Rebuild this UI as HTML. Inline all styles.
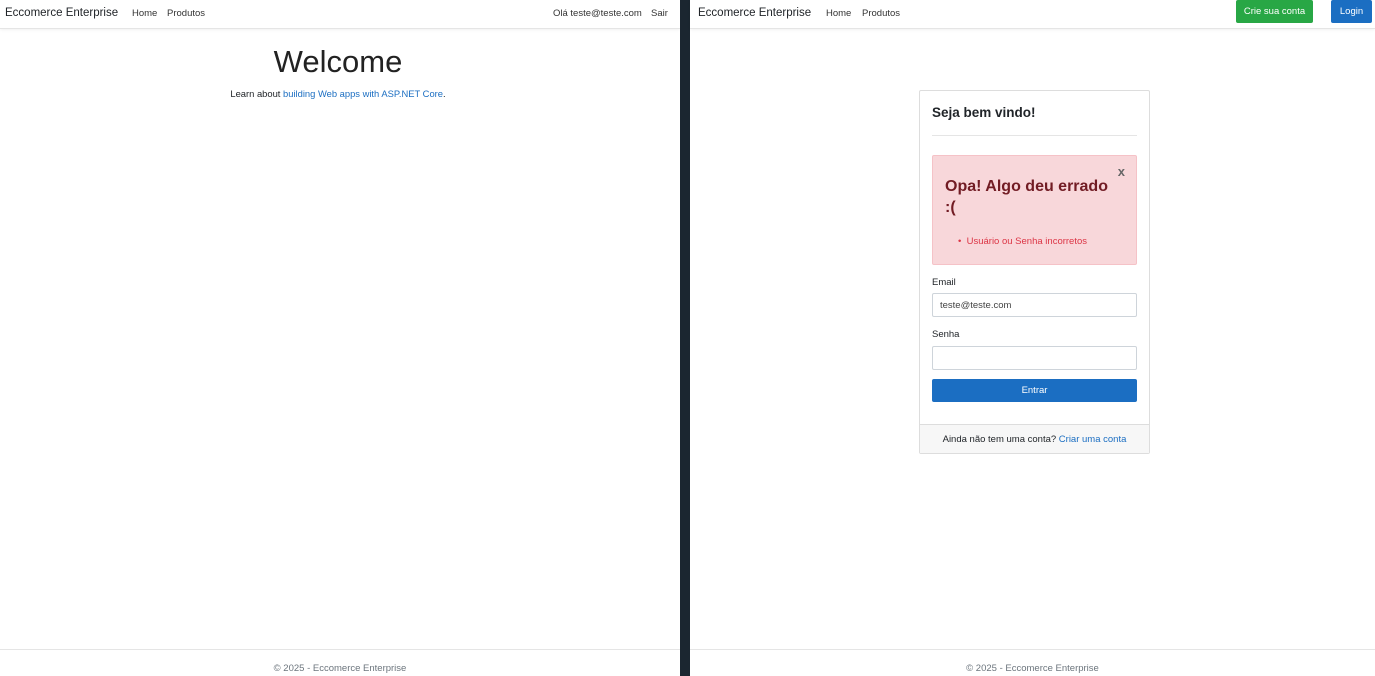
<!DOCTYPE html>
<html><head><meta charset="utf-8"><style>
*{box-sizing:border-box;margin:0;padding:0}
body{width:1375px;height:676px;overflow:hidden;font-family:"Liberation Sans",sans-serif;font-size:9.5px;color:#212529;background:#fff;position:relative}
.pane{position:absolute;top:0;height:676px;background:#fff}
.nav{position:absolute;left:0;right:0;top:0;height:29px;border-bottom:1px solid #e5e5e5;box-shadow:0 1px 3px rgba(0,0,0,.06)}
.brand{position:absolute;top:7px;font-size:11.5px;color:#212529}
.link{position:absolute;top:8px;font-size:9.5px;color:#333}
.foot{position:absolute;left:0;right:0;top:649px;border-top:1px solid #e5e5e5;text-align:center;padding-top:13px;color:#6c757d;font-size:9.5px}
a{color:#1b6ec2;text-decoration:none}
.btn{position:absolute;top:0;height:23px;line-height:23px;color:#fff;font-size:9.5px;text-align:center;border-radius:2px}
</style></head><body>
<div class="pane" style="left:0;width:680px">
 <div class="nav">
  <span class="brand" style="left:5px">Eccomerce Enterprise</span>
  <span class="link" style="left:132px">Home</span>
  <span class="link" style="left:167px">Produtos</span>
  <span class="link" style="left:553px">Olá teste@teste.com</span>
  <span class="link" style="left:651px">Sair</span>
 </div>
 <div style="position:absolute;left:0;width:676px;top:44px;text-align:center;font-size:31px;font-weight:300;color:#222">Welcome</div>
 <div style="position:absolute;left:0;width:676px;top:88px;text-align:center;font-size:9.4px">Learn about <a>building Web apps with ASP.NET Core</a>.</div>
 <div class="foot">© 2025 - Eccomerce Enterprise</div>
</div>
<div style="position:absolute;left:680px;top:0;width:10px;height:676px;background:#1b2630"></div>
<div class="pane" style="left:690px;width:685px">
 <div class="nav">
  <span class="brand" style="left:8px">Eccomerce Enterprise</span>
  <span class="link" style="left:136px">Home</span>
  <span class="link" style="left:172px">Produtos</span>
  <span class="btn" style="left:546px;width:77px;background:#28a745">Crie sua conta</span>
  <span class="btn" style="left:641px;width:41px;background:#1b6ec2">Login</span>
 </div>
 <div style="position:absolute;left:229px;top:90px;width:231px;height:364px;border:1px solid #ddd;border-radius:2px">
  <div style="position:absolute;left:12px;top:14px;font-size:13.5px;font-weight:bold">Seja bem vindo!</div>
  <div style="position:absolute;left:12px;right:12px;top:44px;border-top:1px solid #e5e5e5"></div>
  <div style="position:absolute;left:12px;right:12px;top:64px;height:110px;background:#f8d7da;border:1px solid #f5c2c7;border-radius:2px">
   <div style="position:absolute;right:11px;top:8px;font-size:13px;font-weight:bold;color:#666">x</div>
   <div style="position:absolute;left:12px;top:20px;font-size:16px;font-weight:bold;color:#721c24;line-height:21px">Opa! Algo deu errado<br>:(</div>
   <div style="position:absolute;left:25px;top:80px;font-size:9.5px;color:#dc3545">•&nbsp; Usuário ou Senha incorretos</div>
  </div>
  <div style="position:absolute;left:12px;top:186px;font-size:9.5px">Email</div>
  <div style="position:absolute;left:12px;right:12px;top:202px;height:24px;border:1px solid #ced4da;border-radius:2px;padding:6px 7px;font-size:9.5px;color:#444">teste@teste.com</div>
  <div style="position:absolute;left:12px;top:238px;font-size:9.5px">Senha</div>
  <div style="position:absolute;left:12px;right:12px;top:255px;height:24px;border:1px solid #ced4da;border-radius:2px"></div>
  <div style="position:absolute;left:12px;right:12px;top:288px;height:23px;background:#1b6ec2;border-radius:2px;color:#fff;text-align:center;line-height:23px;font-size:9.5px">Entrar</div>
  <div style="position:absolute;left:0;right:0;top:333px;bottom:0;background:#f7f7f7;border-top:1px solid #ddd;text-align:center;line-height:29px;font-size:9.5px">Ainda não tem uma conta? <a>Criar uma conta</a></div>
 </div>
 <div class="foot">© 2025 - Eccomerce Enterprise</div>
</div>
</body></html>
